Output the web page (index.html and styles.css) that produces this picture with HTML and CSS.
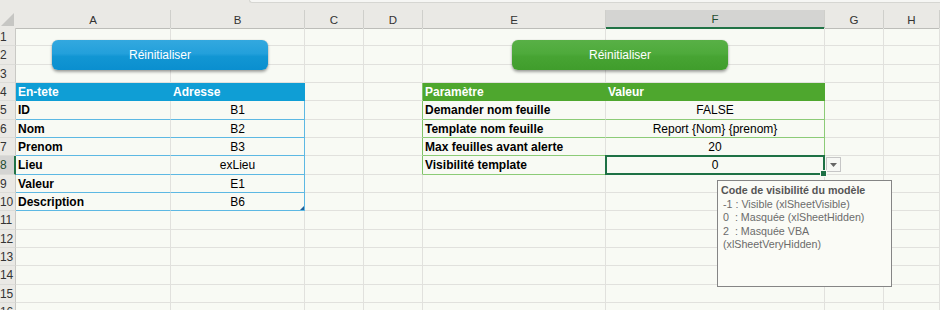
FILE: index.html
```html
<!DOCTYPE html>
<html lang="fr">
<head>
<meta charset="utf-8">
<title>Feuille</title>
<link rel="stylesheet" href="styles.css">
</head>
<body>
<div class="topbar"><div class="formula-edge"></div></div>
<div class="sheet">
  <div class="r hdr">
    <div class="corner"><svg width="16" height="18" viewBox="0 0 16 18"><polygon points="14,3 14,16 1,16" fill="#c6c6c3"/></svg></div>
    <div class="ch">A</div><div class="ch">B</div><div class="ch">C</div><div class="ch">D</div><div class="ch">E</div><div class="ch sel">F</div><div class="ch">G</div><div class="ch">H</div>
  </div>
  <div class="r"><div class="rh">1</div><div class="c"></div><div class="c"></div><div class="c"></div><div class="c"></div><div class="c"></div><div class="c"></div><div class="c"></div><div class="c"></div></div>
  <div class="r"><div class="rh">2</div><div class="c"></div><div class="c"></div><div class="c"></div><div class="c"></div><div class="c"></div><div class="c"></div><div class="c"></div><div class="c"></div></div>
  <div class="r"><div class="rh">3</div><div class="c"></div><div class="c"></div><div class="c"></div><div class="c"></div><div class="c"></div><div class="c"></div><div class="c"></div><div class="c"></div></div>
  <div class="r"><div class="rh">4</div><div class="c bh bh-a">En-tete</div><div class="c bh bh-b">Adresse</div><div class="c"></div><div class="c gl"></div><div class="c gh gh-e">Paramètre</div><div class="c gh gh-f">Valeur</div><div class="c"></div><div class="c"></div></div>
  <div class="r"><div class="rh">5</div><div class="c b-a">ID</div><div class="c b-b">B1</div><div class="c"></div><div class="c gl"></div><div class="c g-e">Demander nom feuille</div><div class="c g-f">FALSE</div><div class="c"></div><div class="c"></div></div>
  <div class="r"><div class="rh">6</div><div class="c b-a">Nom</div><div class="c b-b">B2</div><div class="c"></div><div class="c gl"></div><div class="c g-e">Template nom feuille</div><div class="c g-f">Report {Nom} {prenom}</div><div class="c"></div><div class="c"></div></div>
  <div class="r"><div class="rh">7</div><div class="c b-a">Prenom</div><div class="c b-b">B3</div><div class="c"></div><div class="c gl"></div><div class="c g-e">Max feuilles avant alerte</div><div class="c g-f">20</div><div class="c"></div><div class="c"></div></div>
  <div class="r"><div class="rh rsel">8</div><div class="c b-a">Lieu</div><div class="c b-b">exLieu</div><div class="c"></div><div class="c gl"></div><div class="c g-e">Visibilité template</div><div class="c g-f active">0</div><div class="c"></div><div class="c"></div></div>
  <div class="r"><div class="rh">9</div><div class="c b-a">Valeur</div><div class="c b-b">E1</div><div class="c"></div><div class="c"></div><div class="c"></div><div class="c"></div><div class="c"></div><div class="c"></div></div>
  <div class="r"><div class="rh">10</div><div class="c b-a">Description</div><div class="c b-b last">B6</div><div class="c"></div><div class="c"></div><div class="c"></div><div class="c"></div><div class="c"></div><div class="c"></div></div>
  <div class="r"><div class="rh">11</div><div class="c"></div><div class="c"></div><div class="c"></div><div class="c"></div><div class="c"></div><div class="c"></div><div class="c"></div><div class="c"></div></div>
  <div class="r"><div class="rh">12</div><div class="c"></div><div class="c"></div><div class="c"></div><div class="c"></div><div class="c"></div><div class="c"></div><div class="c"></div><div class="c"></div></div>
  <div class="r"><div class="rh">13</div><div class="c"></div><div class="c"></div><div class="c"></div><div class="c"></div><div class="c"></div><div class="c"></div><div class="c"></div><div class="c"></div></div>
  <div class="r"><div class="rh">14</div><div class="c"></div><div class="c"></div><div class="c"></div><div class="c"></div><div class="c"></div><div class="c"></div><div class="c"></div><div class="c"></div></div>
  <div class="r"><div class="rh">15</div><div class="c"></div><div class="c"></div><div class="c"></div><div class="c"></div><div class="c"></div><div class="c"></div><div class="c"></div><div class="c"></div></div>
  <div class="r"><div class="rh">16</div><div class="c"></div><div class="c"></div><div class="c"></div><div class="c"></div><div class="c"></div><div class="c"></div><div class="c"></div><div class="c"></div></div>

  <div class="btn btn-blue">Réinitialiser</div>
  <div class="btn btn-green">Réinitialiser</div>
  <div class="dropdown"><svg width="7" height="4" viewBox="0 0 7 4"><polygon points="0,0 7,0 3.5,4" fill="#666"/></svg></div>
  <div class="tip">
    <div class="tip-title">Code de visibilité du modèle</div>
    <div class="tip-line">-1 : Visible (xlSheetVisible)</div>
    <div class="tip-line">0&nbsp; : Masquée (xlSheetHidden)</div>
    <div class="tip-line">2&nbsp; : Masquée VBA</div>
    <div class="tip-line">(xlSheetVeryHidden)</div>
  </div>
</div>
</body>
</html>
```
FILE: styles.css
```css
* { box-sizing: border-box; }
html, body { margin: 0; padding: 0; }
body {
  width: 940px;
  height: 310px;
  overflow: hidden;
  background: #f8faf4;
  font-family: "Liberation Sans", Arial, sans-serif;
}
.topbar {
  height: 10px;
  background: #eae9e5;
}
.formula-edge {
  margin-left: 249px;
  height: 3px;
  background: #f6f6f4;
  border-bottom: 1px solid #d6d6d2;
  border-left: 1px solid #d6d6d2;
  border-bottom-left-radius: 3px;
}
.sheet {
  position: relative;
}
.r {
  display: grid;
  grid-template-columns: 16px 155px 134px 59px 59px 183px 219px 59px 56px;
  height: 18.333px;
}
.r.hdr { height: 18px; }
.corner {
  background: #eae9e5;
  border-bottom: 1px solid #bdbdb9;
}
.corner svg { display: block; }
.ch {
  background: #eae9e5;
  border-bottom: 1px solid #bdbdb9;
  border-right: 1px solid #cfcfcb;
  display: flex;
  align-items: center;
  justify-content: center;
  font-size: 11.5px;
  color: #333;
  padding-top: 1px;
}
.ch.sel {
  background: #d4d4d2;
  border-bottom: 2px solid #217346;
  color: #1f4d30;
}
.rh {
  background: #eae9e5;
  border-right: 1px solid #c9c9c5;
  border-bottom: 1px solid #dcdcd8;
  font-size: 12px;
  color: #333;
  display: flex;
  align-items: center;
  padding-left: 0;
  padding-top: 1px;
  letter-spacing: -0.2px;
  overflow: hidden;
}
.rh.rsel {
  background: #d4d4d2;
  border-right: 2px solid #217346;
  color: #1f4d30;
}
.c {
  border-right: 1px solid #e1e1dd;
  border-bottom: 1px solid #e1e1dd;
  font-size: 12px;
  color: #000;
  display: flex;
  align-items: center;
  white-space: nowrap;
  padding: 1px 2px 0;
  position: relative;
}

/* blue table */
.bh {
  background: #0f9ed5;
  color: #fff;
  font-weight: bold;
  border-bottom-color: #0f9ed5;
}
.bh-a { border-right-color: #0f9ed5; }
.bh-b { border-right-color: #0f9ed5; }
.b-a {
  font-weight: bold;
  border-bottom-color: #5db8e3;
}
.b-b {
  justify-content: center;
  border-bottom-color: #5db8e3;
  border-right-color: #5db8e3;
}
.b-b.last::after {
  content: "";
  position: absolute;
  right: 0;
  bottom: 0;
  width: 0;
  height: 0;
  border-left: 4px solid transparent;
  border-bottom: 4px solid #1d5f9a;
}

/* green table */
.gl { border-right-color: #7fc267; }
.gh {
  background: #4ea72e;
  color: #fff;
  font-weight: bold;
  border-bottom-color: #4ea72e;
}
.gh-e { border-right-color: #4ea72e; }
.gh-f { border-right-color: #4ea72e; }
.g-e {
  font-weight: bold;
  border-bottom-color: #8ccb77;
}
.g-f {
  justify-content: center;
  border-bottom-color: #8ccb77;
  border-right-color: #8ccb77;
}
.active::after {
  content: "";
  position: absolute;
  left: -1px;
  top: -1px;
  right: -1px;
  bottom: -1px;
  border: 2px solid #1e7145;
}
.active::before {
  content: "";
  position: absolute;
  right: -3px;
  bottom: -3px;
  width: 5px;
  height: 5px;
  background: #1e7145;
  border: 1px solid #f8faf4;
  z-index: 2;
}

/* shapes over the grid */
.btn {
  position: absolute;
  top: 30px;
  height: 30px;
  width: 216px;
  border-radius: 6px;
  color: #fff;
  font-size: 12px;
  display: flex;
  align-items: center;
  justify-content: center;
  box-shadow: 0 2px 3px rgba(0,0,0,0.35), 0 0 1px rgba(0,0,0,0.3);
}
.btn-blue {
  left: 52px;
  background: linear-gradient(#33a8df 0%, #23a0db 45%, #1296d3 55%, #0a8fcf 100%);
}
.btn-green {
  left: 512px;
  background: linear-gradient(#58b046 0%, #4eaa3b 45%, #47a433 55%, #409d2c 100%);
}
.dropdown {
  position: absolute;
  left: 826px;
  top: 147px;
  width: 15px;
  height: 15px;
  background: #f7f8f5;
  border: 1px solid #c6c6c6;
  display: flex;
  align-items: center;
  justify-content: center;
}
.dropdown svg { display: block; }
.tip {
  position: absolute;
  left: 717px;
  top: 170px;
  width: 175px;
  height: 107px;
  background: #fafbf6;
  border: 1px solid #858585;
  padding: 3px 3px;
  font-size: 10.7px;
  line-height: 13.6px;
  white-space: nowrap;
}
.tip-title {
  font-weight: bold;
  color: #555;
}
.tip-line {
  color: #6b6b6b;
  padding-left: 2px;
}
```
